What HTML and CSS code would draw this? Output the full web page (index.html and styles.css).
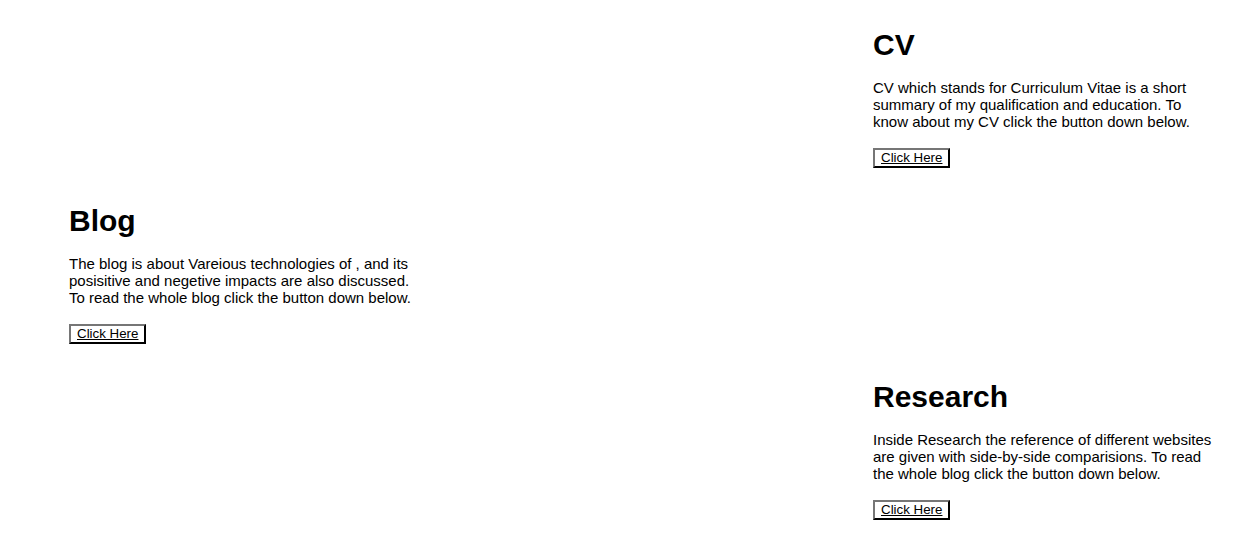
FILE: index.html
```html
<!DOCTYPE html>
<html lang="en">
<head>
<meta charset="utf-8">
<title>Home</title>
<link rel="stylesheet" href="styles.css">
</head>
<body>
<main class="page">
  <section class="card card-right">
    <h1 class="card-title">CV</h1>
    <p class="card-text">CV which stands for Curriculum Vitae is a short summary of my qualification and education. To know about my CV click the button down below.</p>
    <button class="btn"><a href="#">Click Here</a></button>
  </section>
  <section class="card card-left">
    <h1 class="card-title">Blog</h1>
    <p class="card-text">The blog is about Vareious technologies of , and its posisitive and negetive impacts are also discussed. To read the whole blog click the button down below.</p>
    <button class="btn"><a href="#">Click Here</a></button>
  </section>
  <section class="card card-right">
    <h1 class="card-title">Research</h1>
    <p class="card-text">Inside Research the reference of different websites are given with side-by-side comparisions. To read the whole blog click the button down below.</p>
    <button class="btn"><a href="#">Click Here</a></button>
  </section>
</main>
</body>
</html>
```
FILE: styles.css
```css
html, body {
  margin: 0;
  padding: 0;
  background: #fff;
}
body {
  font-family: "Liberation Sans", Arial, sans-serif;
  color: #000;
}
.page {
  display: flex;
  flex-direction: column;
  gap: 35px;
  padding: 27px 31px 0 69px;
}
.card {
  width: 345px;
  display: flex;
  flex-direction: column;
  align-items: flex-start;
}
.card-right {
  align-self: flex-end;
}
.card-left {
  align-self: flex-start;
}
.card-title {
  font-size: 30px;
  line-height: 35px;
  font-weight: bold;
  margin: 0 0 17px;
}
.card-text {
  font-size: 15px;
  line-height: 17px;
  margin: 0 0 18px;
}
.btn {
  font-family: "Liberation Sans", Arial, sans-serif;
  font-size: 13.33px;
  line-height: 16px;
  background: #fff;
  padding: 0 6px;
  border-style: solid;
  border-width: 2px;
  border-color: #767676 #000 #000 #767676;
  margin: 0;
}
.btn a {
  color: #000;
  text-decoration: underline;
}
```
